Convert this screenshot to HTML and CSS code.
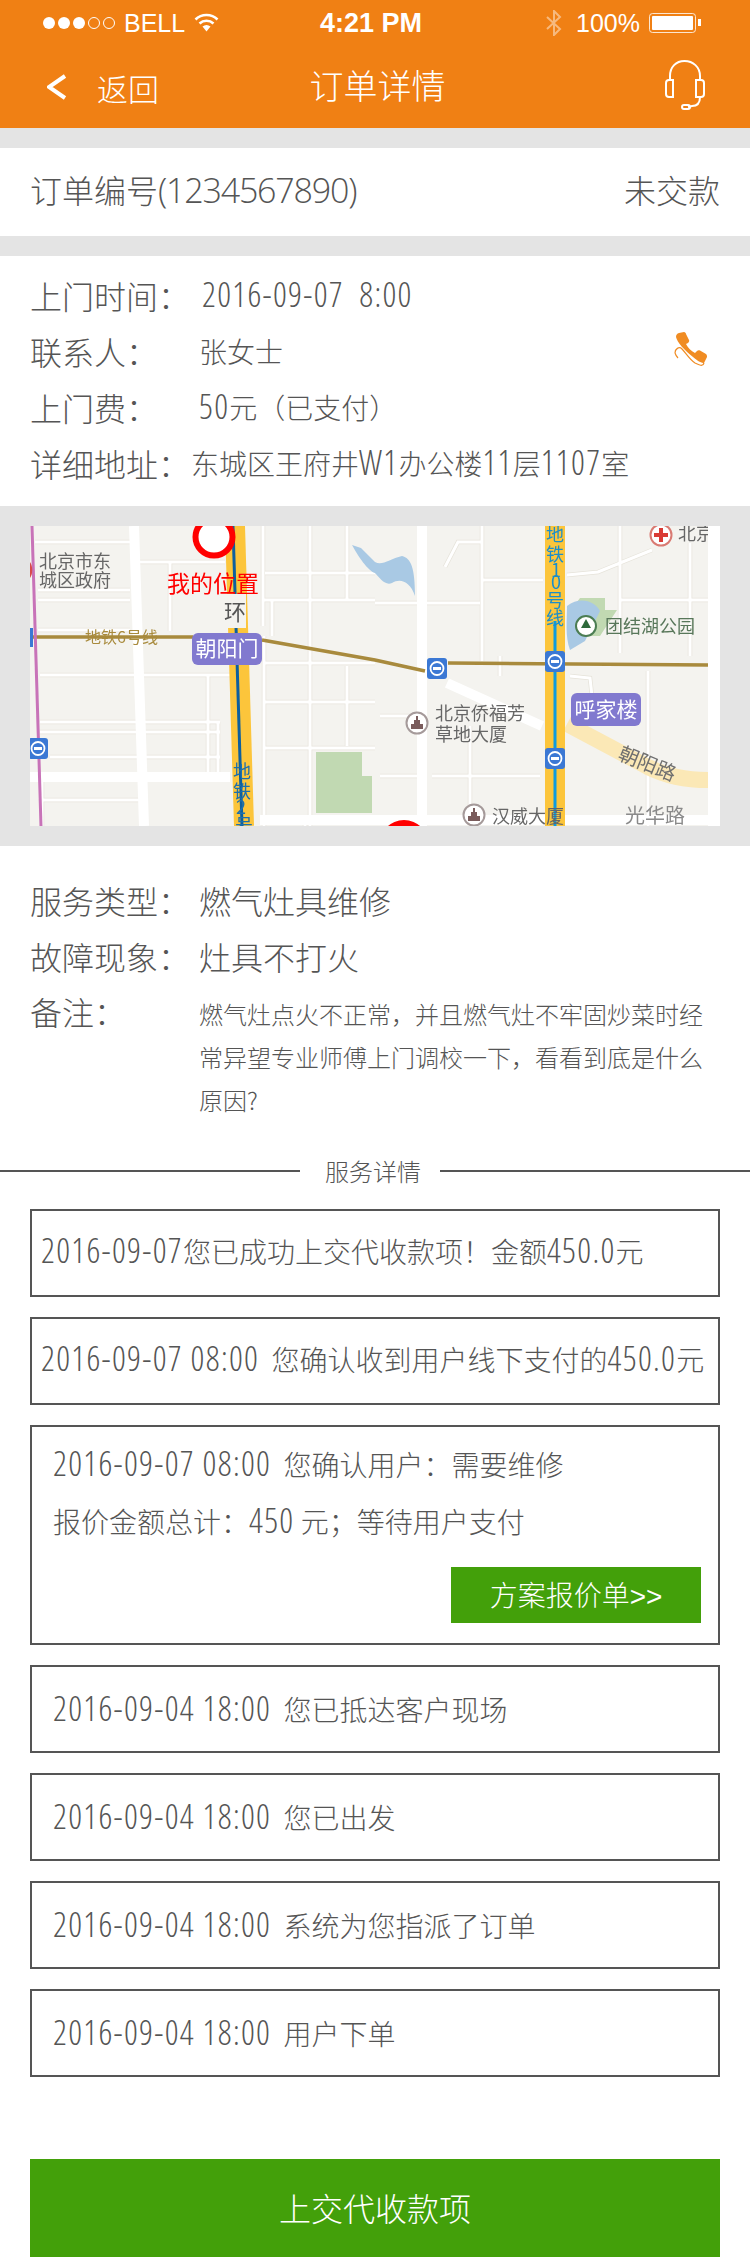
FILE: index.html
```html
<!DOCTYPE html>
<html lang="zh-CN">
<head>
<meta charset="utf-8">
<title>订单详情</title>
<link rel="stylesheet" href="styles.css">
</head>
<body>
<header class="app-head">
  <div class="status">
    <div class="status-left">
      <svg class="dots" width="73" height="14" viewBox="0 0 73 14"><g fill="#fff"><circle cx="6" cy="7" r="6"/><circle cx="21" cy="7" r="6"/><circle cx="36" cy="7" r="6"/></g><g fill="none" stroke="#fff" stroke-width="1"><circle cx="51" cy="7" r="5.5"/><circle cx="66" cy="7" r="5.5"/></g></svg>
      <span class="carrier">BELL</span>
      <svg class="wifi" width="25" height="19" viewBox="0 0 25 19"><g fill="none" stroke="#fff" stroke-width="2.6"><path d="M1.5 6.5C7.5 0.500 17.500 0.500 23.500 6.500"/><path d="M5.500 10.500C9.500 6.800 15.500 6.800 19.500 10.500"/></g><path d="M8.500 13.500C11 11.500 14 11.500 16.500 13.500L12.500 18.500Z" fill="#fff"/></svg>
    </div>
    <span class="clock">4:21 PM</span>
    <div class="status-right">
      <svg class="bt" width="16" height="26" viewBox="0 0 16 26"><path d="M1 7L14 19L8 25V1L14 7L1 19" fill="none" stroke="#fff" stroke-width="2"/></svg>
      <span class="pct">100%</span>
      <svg class="battery" width="53" height="20" viewBox="0 0 53 20"><rect x="0.500" y="0.500" width="46" height="19" rx="3" fill="none" stroke="#fff" stroke-opacity=".8"/><rect x="3" y="3" width="41" height="14" rx="1" fill="#fff"/><rect x="49" y="6" width="3" height="7" fill="#fff"/></svg>
    </div>
  </div>
  <nav class="nav">
    <div class="nav-back">
      <svg class="chev" width="20" height="26" viewBox="0 0 20 26"><path d="M18 2L2 13L18 24" fill="none" stroke="#fff" stroke-width="4"/></svg>
      <span>返回</span>
    </div>
    <h1 class="nav-title">订单详情</h1>
    <svg class="headset" width="42" height="52" viewBox="0 0 42 52"><g fill="none" stroke="#fff" stroke-width="2"><path d="M6 21V17C6 8 12 2 20.500 2C29 2 36 8 36 17V21"/><path d="M9 21H5C3 21 2 22 2 24V35C2 37 3 38 5 38H9Z"/><path d="M32 21H37C39 21 40 22 40 24V35C40 37 39 38 37 38H32Z"/><path d="M36 38C36 44 33 47 28 47L24 48"/><rect x="18" y="46" width="8" height="4" rx="2"/></g></svg>
  </nav>
</header>

<section class="order-bar">
  <span>订单编号<span class="n n-order">(1234567890)</span></span>
  <span>未交款</span>
</section>

<section class="info">
  <div class="info-row"><span class="label">上门时间：</span><span class="value date"><span class="n">2016-09-07&nbsp; 8:00</span></span></div>
  <div class="info-row">
    <span class="label">联系人：</span><span class="value">张女士</span>
    <svg class="phone" width="34" height="38" viewBox="0 0 34 38"><path d="M5 1L10 0C11 0 12 1 12 2L15 8C15.500 9 15 10 14 11L12 12C14 16 17 19 21 21L23 19C24 18 25 18 26 18.500L32 22C33 23 33 24 33 25L30 31C28 31 24 29.500 19 25C11 19 3 10 2 5C2 3 3 1.500 5 1Z" fill="#f08c23"/><path d="M1 21C1 17 5 14 8 17C12 21 15 27 21 31C25 33 29 35 30 31M1 21C2 24 3 25 4 26" fill="none" stroke="#f08c23" stroke-width="1.200"/></svg>
  </div>
  <div class="info-row"><span class="label">上门费：</span><span class="value"><span class="n">50</span>元（已支付）</span></div>
  <div class="info-row"><span class="label label-tight">详细地址：</span><span class="value">东城区王府井<span class="n">W1</span>办公楼<span class="n">11</span>层<span class="n">1107</span>室</span></div>
</section>

<section class="map-wrap">
  <svg class="map" width="690" height="300" viewBox="0 0 690 300">
    <defs>
      <g id="roads">
        <path d="M5 16H100M108 36H195M8 64H100M8 74H100M8 104H100M10 149H200M10 196H190M10 206H190M20 231H190M12 274H110M12 251V300M140 36V105M178 150V250M188 196V250M233 0V100M242 75V110M280 0V300M317 0V75M317 140V220M233 74H345M235 47H345M235 137H345M235 176H345M235 222H345M234 110V300M275 290V300M345 77H450M415 41L428 16H452M452 0V135M452 54H513M537 49L568 46L622 24M590 0V127M660 17V130M590 74H678M618 145V300M440 200V290M350 190H390M350 250H390M402 250H510M470 150V130M540 150L560 152L562 170"/>
      </g>
      <g id="metro">
        <rect width="20" height="21" rx="3" fill="#3b78d4"/>
        <circle cx="10" cy="10.500" r="6.500" fill="none" stroke="#fff" stroke-width="1.800"/>
        <rect x="6" y="9" width="8" height="3" fill="#fff"/>
      </g>
      <g id="tower">
        <circle r="10.500" fill="#fff" stroke="#a59a9a" stroke-width="2"/>
        <path d="M-6 6V1H-3V-3H-1V-7H1V-3H3V1H6V6Z" fill="#7a5c5c"/>
      </g>
      <filter id="soft"><feGaussianBlur stdDeviation="0.450"/></filter>
    </defs>
    <g filter="url(#soft)">
      <rect width="690" height="300" fill="#f4f3ef"/>
      <use href="#roads" class="road-edge"/>
      <use href="#roads" class="road-thin"/>
      <path class="road-wide" d="M104 0L114 300M0 251H200M230 294H678M392 0V300"/>
      <path class="water" d="M322 19L331 22L345 36C352 40 360 33 372 30C381 32 385 42 385 70C380 55 370 52 362 57C355 60 350 52 345 47C338 45 328 30 322 19Z"/>
      <path class="park" d="M286 226H332V250H342V287H286Z"/>
      <path class="park" d="M537 90L550 72H575V84H587L570 110H540Z"/>
      <path class="water" d="M537 80C550 70 565 75 570 85L555 115L540 124C535 110 537 95 537 80Z"/>
      <path class="road-wide" d="M417 157L512 200"/>
      <path class="road-cream" d="M537 198L618 241C640 252 660 254 678 254"/>
      <path class="rail6" d="M3 111H163M232 114L345 134L395 145M418 137L678 139"/>
      <path class="line-purple" d="M2 0L11 300"/>
      <path class="band" d="M205 0L214 300"/>
      <path class="rail2" d="M203 0L212 300"/>
      <path class="band" d="M525 0V300"/>
      <path class="rail10" d="M525 95V300"/>
      <rect x="0" y="102" width="3" height="19" fill="#3b78d4"/>
      <path d="M0 36C3 40 3 48 0 52Z" fill="#d84c4c"/>
      <use href="#metro" x="-2" y="212"/>
      <use href="#metro" x="397" y="132"/>
      <use href="#metro" x="515" y="125"/>
      <use href="#metro" x="515" y="222"/>
      <rect x="194" y="68" width="22" height="34" fill="#f4f3ef"/>
      <circle cx="184" cy="11" r="18.500" fill="#fff" stroke="#f00" stroke-width="6"/>
      <circle cx="374" cy="319" r="25" fill="#f00"/>
      <text class="m-label" x="9" y="42">北京市东</text>
      <text class="m-label" x="9" y="61">城区政府</text>
      <text class="m-rail" x="55" y="117">地铁6号线</text>
      <text class="m-me" x="137" y="66">我的位置</text>
      <text class="m-ring" x="205" y="94">环</text>
      <rect x="162" y="107" width="70" height="32" rx="6" fill="#8179cf"/>
      <text class="m-stn" x="197" y="130">朝阳门</text>
      <text class="m-v2" x="203" y="252">地</text>
      <text class="m-v2" x="203" y="272">铁</text>
      <text class="m-v2" x="206" y="288">2</text>
      <text class="m-v2" x="205" y="306">号</text>
      <text class="m-v10" x="516" y="15">地</text>
      <text class="m-v10" x="516" y="35">铁</text>
      <text class="m-v10" x="521" y="51">1</text>
      <text class="m-v10" x="521" y="63">0</text>
      <text class="m-v10" x="516" y="81">号</text>
      <text class="m-v10" x="516" y="99">线</text>
      <circle cx="556" cy="100" r="10" fill="#fff" stroke="#4c7d52" stroke-width="2"/>
      <path d="M556 93L561 102H551Z" fill="#2f6b3a"/>
      <text class="m-park" x="575" y="107">团结湖公园</text>
      <circle cx="631" cy="9" r="10.500" fill="#fff" stroke="#d97a72" stroke-width="2"/>
      <path d="M629 2H633V7H638V11H633V16H629V11H624V7H629Z" fill="#d93a34"/>
      <text class="m-label" x="648" y="14">北京</text>
      <rect x="541" y="167" width="70" height="33" rx="6" fill="#8179cf"/>
      <text class="m-stn" x="576" y="191">呼家楼</text>
      <text class="m-road" transform="translate(587 233) rotate(22)">朝阳路</text>
      <use href="#tower" x="387" y="197"/>
      <text class="m-label" x="405" y="194">北京侨福芳</text>
      <text class="m-label" x="405" y="215">草地大厦</text>
      <use href="#tower" x="444" y="289"/>
      <text class="m-label" x="462" y="297">汉威大厦</text>
      <text class="m-light" x="595" y="297">光华路</text>
    </g>
    <rect x="678" width="12" height="300" fill="#fff"/>
  </svg>
</section>

<section class="service">
  <div class="svc-row"><span class="label">服务类型：</span><span class="svc-value">燃气灶具维修</span></div>
  <div class="svc-row"><span class="label">故障现象：</span><span class="svc-value">灶具不打火</span></div>
  <div class="svc-row svc-note"><span class="label">备注：</span><p class="note">燃气灶点火不正常，并且燃气灶不牢固炒菜时经常异望专业师傅上门调校一下，看看到底是什么原因?</p></div>
</section>

<div class="divider"><span>服务详情</span></div>

<section class="timeline">
  <div class="log log-narrow"><span class="n">2016-09-07</span>您已成功上交代收款项！金额<span class="n">450.0</span>元</div>
  <div class="log log-narrow"><span class="n">2016-09-07 08:00</span>&nbsp; 您确认收到用户线下支付的<span class="n">450.0</span>元</div>
  <div class="log log-quote">
    <p><span class="n">2016-09-07 08:00</span>&nbsp; 您确认用户：需要维修</p>
    <p>报价金额总计：<span class="n">450</span> 元；等待用户支付</p>
    <a class="quote-btn">方案报价单<span class="gt">&gt;&gt;</span></a>
  </div>
  <div class="log log-low"><span class="n">2016-09-04 18:00</span>&nbsp; 您已抵达客户现场</div>
  <div class="log log-low"><span class="n">2016-09-04 18:00</span>&nbsp; 您已出发</div>
  <div class="log log-low"><span class="n">2016-09-04 18:00</span>&nbsp; 系统为您指派了订单</div>
  <div class="log log-low"><span class="n">2016-09-04 18:00</span>&nbsp; 用户下单</div>
</section>

<a class="submit">上交代收款项</a>
</body>
</html>
```

FILE: styles.css
```css
* { box-sizing: border-box; }
html, body { margin: 0; padding: 0; }
body {
  width: 750px;
  background: #fff;
  color: #555;
  font-family: "Noto Sans CJK SC", sans-serif;
  font-weight: 300;
  overflow-x: hidden;
}
p, h1 { margin: 0; font-weight: 300; }

.n {
  font-family: "Open Sans", sans-serif;
  font-weight: 300;
  font-stretch: 75%;
  font-size: 34px;
  letter-spacing: 1.3px;
  line-height: 1;
}
.n-order { font-stretch: 100%; letter-spacing: -1.2px; }
.gt { font-family: "Liberation Sans", sans-serif; font-weight: 400; }

.app-head { height: 128px; background: #f08014; color: #fff; }
.status { height: 46px; display: flex; align-items: center; padding: 0 48px 0 43px; font-family: "Liberation Sans", sans-serif; }
.status-left { width: 277px; display: flex; align-items: center; }
.carrier { margin-left: 8px; font-size: 25px; width: 70px; font-weight: 400; }
.wifi { margin-top: -2px; }
.clock { font-size: 27px; font-weight: 700; }
.status-right { margin-left: auto; display: flex; align-items: center; }
.bt { opacity: .45; margin-right: 14px; }
.pct { font-size: 25px; margin-right: 9px; }
.nav { height: 82px; display: grid; grid-template-columns: 1fr auto 1fr; align-items: center; padding: 0 44px 4px 47px; }
.nav-back { display: flex; align-items: center; gap: 30px; font-size: 31px; margin-top: 4px; }
.nav-title { font-size: 34px; line-height: 44px; margin-left: 2px; }
.headset { justify-self: end; }

.order-bar {
  margin-top: 20px;
  height: 88px;
  padding: 0 30px 6px;
  display: flex;
  justify-content: space-between;
  align-items: center;
  font-size: 32px;
  box-shadow: 0 -20px 0 #e4e4e4;
}

.info { border-top: 20px solid #e4e4e4; padding: 11px 30px 15px; height: 270px; }
.info-row { height: 56px; display: flex; align-items: center; }
.label { width: 169px; flex: none; font-size: 32px; }
.label-tight { width: 161px; }
.value { font-size: 28px; }
.date { padding-left: 3px; }
.phone { margin-left: auto; margin-right: 12px; }

.map-wrap { background: #e4e4e4; padding: 20px 30px; }
.map { display: block; }
.road-edge { fill: none; stroke: #e6e3da; stroke-width: 4.5; }
.road-thin { fill: none; stroke: #fff; stroke-width: 3; }
.road-wide { fill: none; stroke: #fff; stroke-width: 10; }
.road-cream { fill: none; stroke: #fbe8b6; stroke-width: 16; }
.rail6 { fill: none; stroke: #a88a3c; stroke-width: 3.5; }
.line-purple { fill: none; stroke: #c873b8; stroke-width: 3; }
.band { fill: none; stroke: #fcc53a; stroke-width: 20; }
.rail2 { fill: none; stroke: #0e5f9e; stroke-width: 3; }
.rail10 { fill: none; stroke: #0a9be0; stroke-width: 3; }
.water { fill: #a9c9e4; }
.park { fill: #c1d9b2; }
.map text { font-family: "Noto Sans CJK SC", sans-serif; font-weight: 400; }
.map .m-label { font-size: 18px; fill: #666; }
.map .m-light { font-size: 20px; fill: #8a8a8a; }
.map .m-rail { font-size: 16px; fill: #a88a3c; }
.map .m-me { font-size: 23px; fill: #f00; }
.map .m-ring { font-size: 22px; fill: #555; text-anchor: middle; }
.map .m-stn { font-size: 21px; fill: #fff; text-anchor: middle; }
.map .m-v2 { font-size: 18px; fill: #1f6fae; }
.map .m-v10 { font-size: 18px; fill: #1b8ecb; }
.map .m-park { font-size: 18px; fill: #58775a; }
.map .m-road { font-size: 20px; fill: #6f6f6f; }

.service { padding: 26px 30px 0; height: 295px; }
.svc-row { height: 56px; display: flex; align-items: center; }
.svc-value { font-size: 32px; }
.svc-note { height: auto; align-items: flex-start; padding-top: 5px; }
.svc-note .label { line-height: 44px; }
.note { width: 510px; margin-top: 3px; font-size: 24px; line-height: 43px; }

.divider { height: 2px; background: #555; margin-top: 29px; display: flex; justify-content: center; }
.divider span { background: #fff; width: 140px; height: 40px; margin: -19px 10px 0 0; padding-left: 6px; text-align: center; font-size: 24px; line-height: 40px; }

.timeline { padding: 37px 30px 0; display: flex; flex-direction: column; gap: 20px; }
.log {
  height: 88px;
  border: 2px solid #555;
  padding-left: 21px;
  font-size: 28px;
  line-height: 80px;
  white-space: nowrap;
}
.log-narrow { padding-left: 9px; }
.log-low { line-height: 84px; }
.log-quote { height: 220px; padding: 17px 0 0 21px; line-height: 40px; }
.log-quote p { height: 57px; }
.quote-btn {
  display: block;
  width: 250px;
  height: 56px;
  margin: 9px 0 0 398px;
  background: #43a00a;
  color: #fff;
  text-align: center;
  font-size: 28px;
  line-height: 54px;
}
.submit {
  display: block;
  margin: 82px 30px 0;
  height: 98px;
  background: #43a00a;
  color: #fff;
  text-align: center;
  font-size: 32px;
  line-height: 96px;
}
```
